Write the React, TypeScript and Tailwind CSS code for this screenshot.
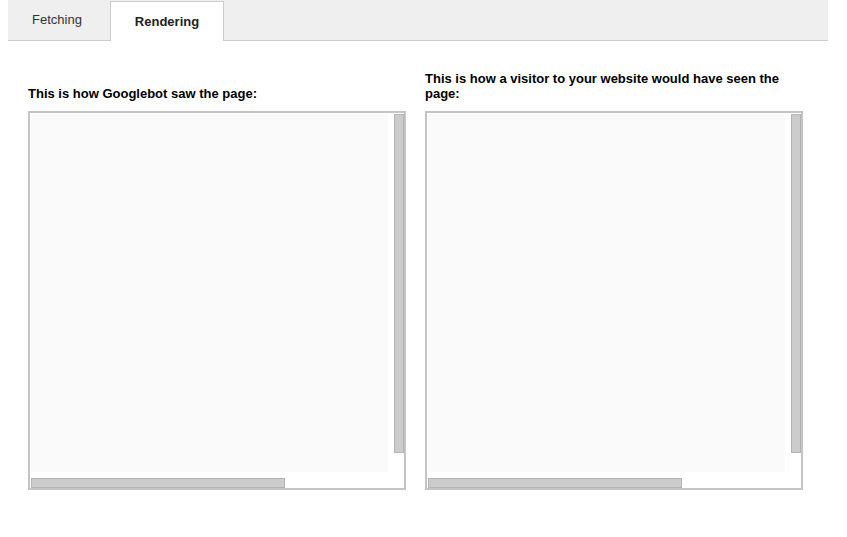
const panels = [
  { title: 'This is how Googlebot saw the page:' },
  { title: 'This is how a visitor to your website would have seen the page:' },
];

function Preview() {
  return (
    <div className="w-[378px] border-2 border-[#c4c4c4] bg-white pl-px pt-px">
      <div className="flex items-start">
        <div className="w-[357px] h-[358px] bg-[#fafafa]" />
        <div className="ml-[6px] w-[10px] h-[339px] border border-[#b4b4b4] bg-[#cccccc]" />
      </div>
      <div className="mt-[6px] w-[254px] h-[10px] border border-[#b4b4b4] bg-[#cccccc]" />
    </div>
  );
}

export default function App() {
  return (
    <div className="min-h-[537px] bg-white text-[13px]" style={{ fontFamily: '"Liberation Sans", Arial, sans-serif' }}>
      {/* Tabs */}
      <div className="mx-2 w-[820px] h-[41px] bg-[#efefef] border-b border-[#cccccc] flex items-end">
        <div className="w-[102px] h-[40px] flex items-center justify-center text-[#333333] pr-[4px]">
          Fetching
        </div>
        <div className="w-[114px] h-[40px] -mb-px bg-white border border-b-0 border-[#cccccc] flex items-center justify-center font-bold text-[#222222] pt-px">
          Rendering
        </div>
      </div>

      <div className="px-7 pt-[30px] grid grid-cols-[378px_378px] gap-x-[19px]">
        {panels.map((p, i) => (
          <div key={i} className="flex flex-col justify-end">
            <h3 className="font-bold text-black leading-[15px] mb-[10px] pr-4">{p.title}</h3>
            <Preview />
          </div>
        ))}
      </div>
    </div>
  );
}
